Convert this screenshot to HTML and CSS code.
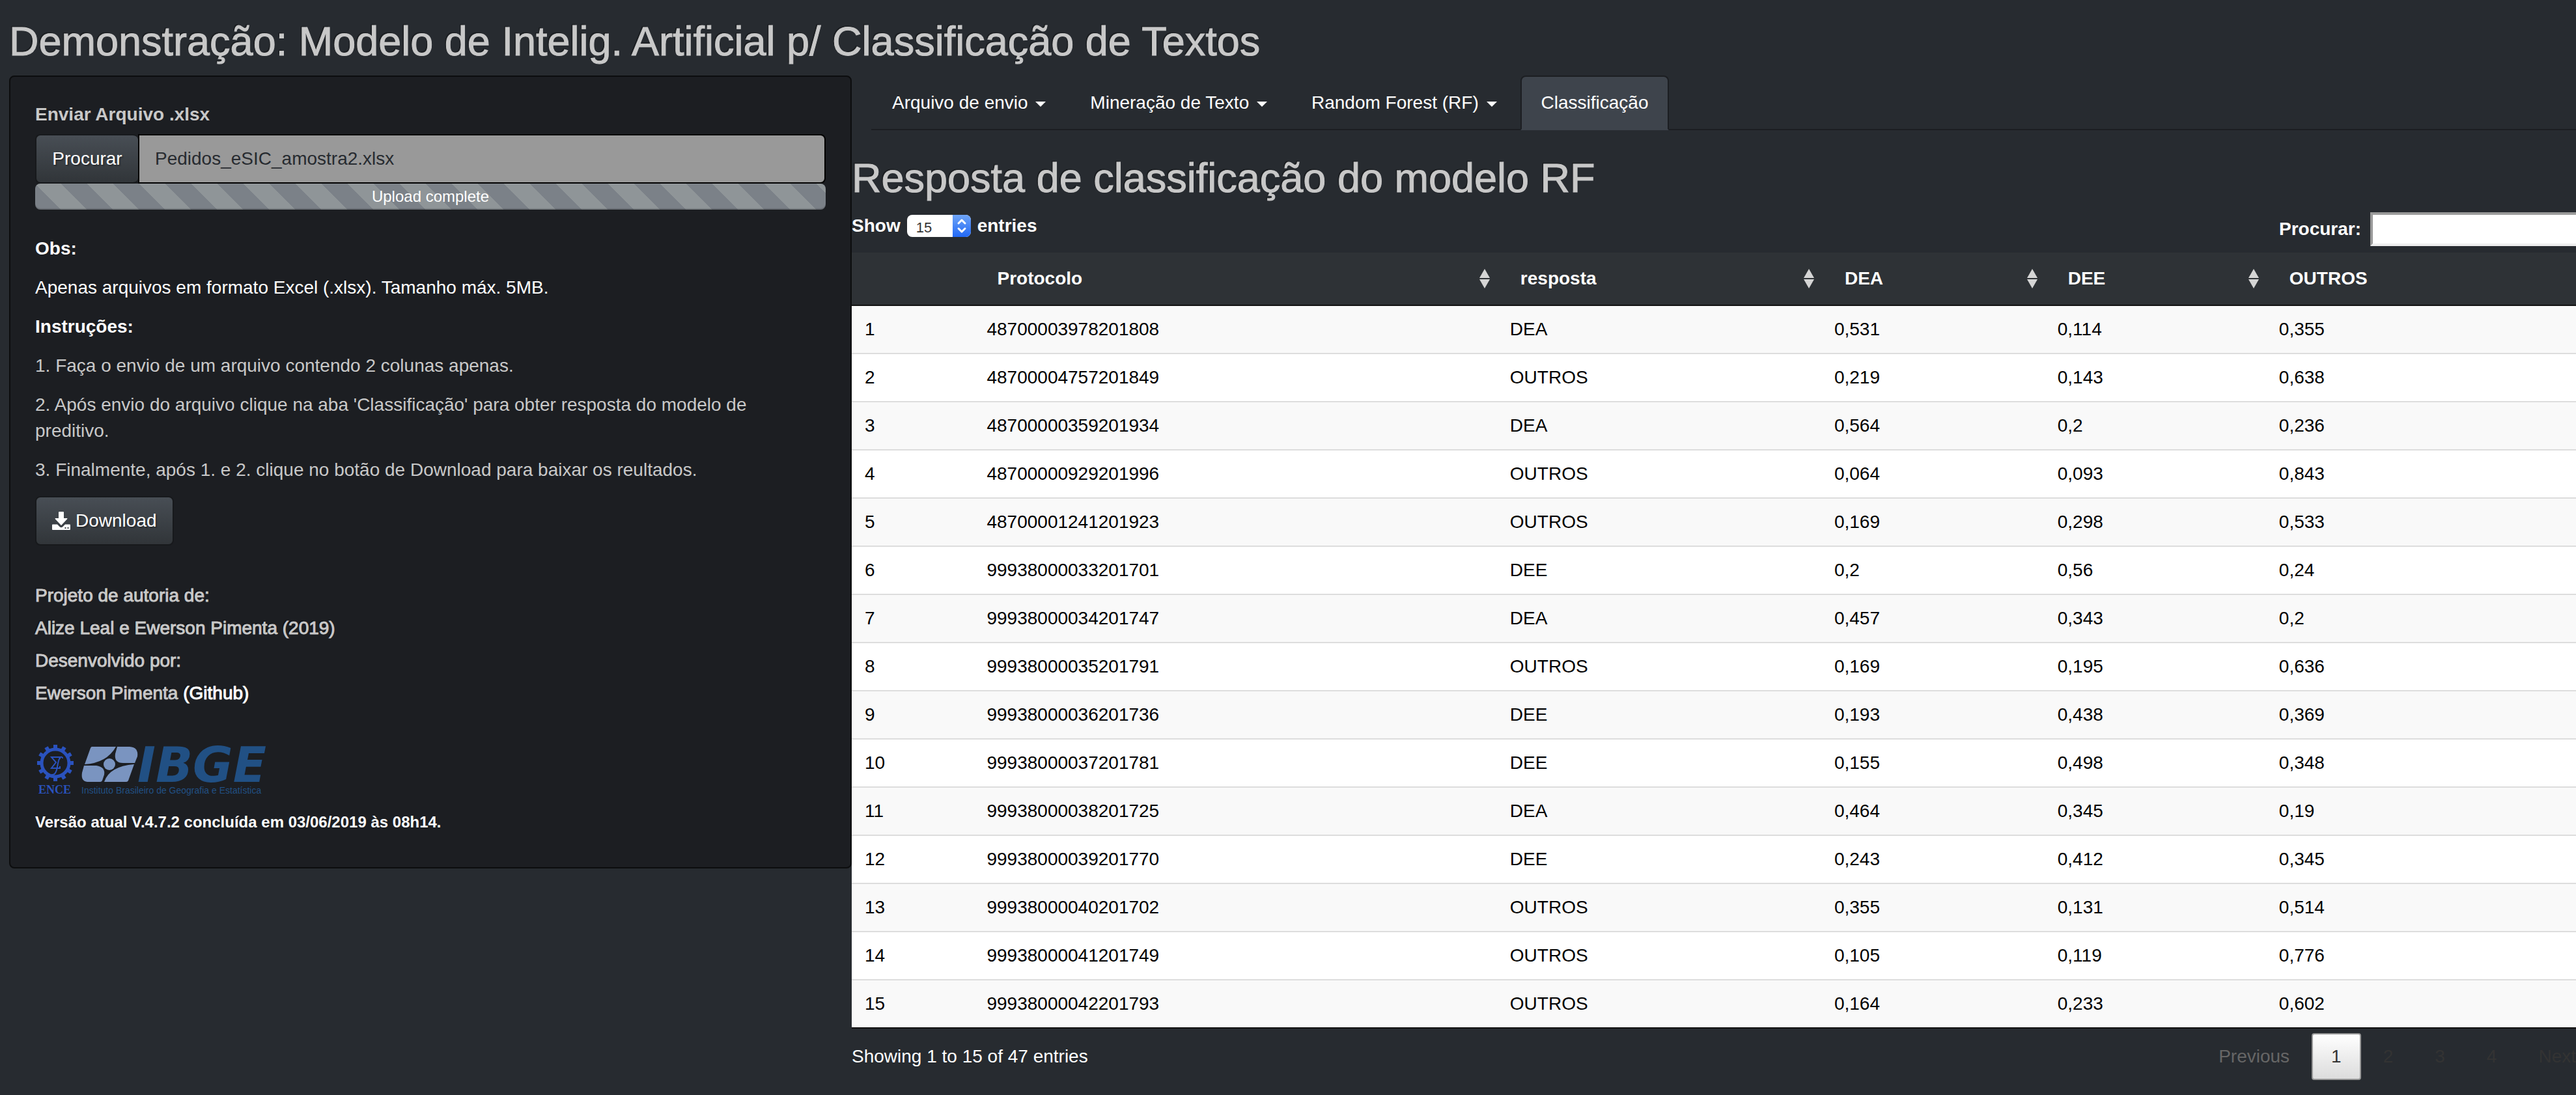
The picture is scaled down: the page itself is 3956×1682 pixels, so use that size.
FILE: index.html
```html
<!DOCTYPE html>
<html lang="pt-BR">
<head>
<meta charset="utf-8">
<title>Classificação de Textos</title>
<link rel="stylesheet" href="styles.css">
</head>
<body>
<h2 class="page-title">Demonstração: Modelo de Intelig. Artificial p/ Classificação de Textos</h2>
<div class="layout">
  <aside class="well">
    <label class="file-label" for="file-name">Enviar Arquivo .xlsx</label>
    <div class="file-group">
      <button class="btn btn-file" type="button">Procurar</button>
      <input class="file-name" id="file-name" type="text" value="Pedidos_eSIC_amostra2.xlsx" readonly>
    </div>
    <div class="progress">Upload complete</div>
    <p class="strong">Obs:</p>
    <p class="white">Apenas arquivos em formato Excel (.xlsx). Tamanho máx. 5MB.</p>
    <p class="strong">Instruções:</p>
    <p>1. Faça o envio de um arquivo contendo 2 colunas apenas.</p>
    <p>2. Após envio do arquivo clique na aba 'Classificação' para obter resposta do modelo de preditivo.</p>
    <p>3. Finalmente, após 1. e 2. clique no botão de Download para baixar os reultados.</p>
    <button class="btn btn-download" type="button">
      <svg class="dl-icon" viewBox="0 0 28 28" aria-hidden="true"><path fill="#fff" fill-rule="evenodd" d="M11 0h6q1 0 1 1v9h5q1 0 0 1.500L14.500 20.500q-.5.5-1 0L5 11.500Q4 10 5 10h5V1q0-1 1-1zM1 19.500h7l4 4q2 1.500 4 0l4-4h7q1 0 1 1V27q0 1-1 1H1q-1 0-1-1v-6.500q0-1 1-1zM19.500 24v2h2v-2zM23.500 24v2h2v-2z"/></svg>
      Download</button>
    <div class="credits">
      <h5>Projeto de autoria de:</h5>
      <h5>Alize Leal e Ewerson Pimenta (2019)</h5>
      <h5>Desenvolvido por:</h5>
      <h5>Ewerson Pimenta <a href="#github">(Github)</a></h5>
    </div>
    <svg class="logos" viewBox="0 0 360 80" role="img" aria-label="ENCE e IBGE">
      <g fill="#2a52be">
        <path d="M28 2h6v56h-6z"/>
        <path d="M28 2h6v56h-6z" transform="rotate(30 31 30)"/>
        <path d="M28 2h6v56h-6z" transform="rotate(60 31 30)"/>
        <path d="M28 2h6v56h-6z" transform="rotate(90 31 30)"/>
        <path d="M28 2h6v56h-6z" transform="rotate(120 31 30)"/>
        <path d="M28 2h6v56h-6z" transform="rotate(150 31 30)"/>
      </g>
      <circle cx="31" cy="30" r="21" fill="#1c1e22" stroke="#2a52be" stroke-width="5"/>
      <path d="M38 24v-3H25l7 8-7 9h13v-3M42 23q0-3-3-2-3 2-5 15-2 12-7 12h-2" fill="none" stroke="#2a52be" stroke-width="2"/>
      <text x="5" y="77" class="ence">ENCE</text>
      <g fill="#7a94c0">
        <path d="M87 5h37Q110 30 76 32l9-25q1-2 2-2z"/>
        <path d="M126 5h19q14 1 12 15l-4 10h-18q-14 0-12-14z"/>
        <path d="M75 34h19q14 2 12 14l-3 9q-1 2-3 2H80q-10-1-8-14z"/>
        <path d="M152 32l-9 25q-1 2-3 2h-34q8-24 46-27z"/>
        <circle cx="114" cy="32" r="9"/>
      </g>
      <text x="157" y="59" class="ibge">IBGE</text>
      <text x="71" y="77" class="ibge-sub">Instituto Brasileiro de Geografia e Estatística</text>
    </svg>
    <h6>Versão atual V.4.7.2 concluída em 03/06/2019 às 08h14.</h6>
  </aside>
  <main class="main">
    <nav class="tabs">
      <a class="tab" href="#envio">Arquivo de envio <span class="caret"></span></a>
      <a class="tab" href="#mineracao">Mineração de Texto <span class="caret"></span></a>
      <a class="tab" href="#rf">Random Forest (RF) <span class="caret"></span></a>
      <a class="tab active" href="#classificacao">Classificação</a>
    </nav>
    <h2 class="result-title">Resposta de classificação do modelo RF</h2>
    <div class="controls">
      <label class="length">Show
        <span class="select-wrap"><select><option>15</option></select><svg class="stepper" viewBox="0 0 28 34" aria-hidden="true"><path d="M9 13l5-5 5 5M9 21l5 5 5-5" fill="none" stroke="#fff" stroke-width="3" stroke-linecap="round" stroke-linejoin="round"/></svg></span>
        entries</label>
      <label class="search">Procurar: <input type="search"></label>
    </div>
    <table class="data">
      <colgroup><col class="c-row"><col class="c-prot"><col class="c-resp"><col class="c-dea"><col class="c-dee"><col class="c-out"></colgroup>
      <thead><tr><th></th><th class="sort">Protocolo</th><th class="sort">resposta</th><th class="sort">DEA</th><th class="sort">DEE</th><th>OUTROS</th></tr></thead>
      <tbody>
        <tr><td>1</td><td>48700003978201808</td><td>DEA</td><td>0,531</td><td>0,114</td><td>0,355</td></tr>
        <tr><td>2</td><td>48700004757201849</td><td>OUTROS</td><td>0,219</td><td>0,143</td><td>0,638</td></tr>
        <tr><td>3</td><td>48700000359201934</td><td>DEA</td><td>0,564</td><td>0,2</td><td>0,236</td></tr>
        <tr><td>4</td><td>48700000929201996</td><td>OUTROS</td><td>0,064</td><td>0,093</td><td>0,843</td></tr>
        <tr><td>5</td><td>48700001241201923</td><td>OUTROS</td><td>0,169</td><td>0,298</td><td>0,533</td></tr>
        <tr><td>6</td><td>99938000033201701</td><td>DEE</td><td>0,2</td><td>0,56</td><td>0,24</td></tr>
        <tr><td>7</td><td>99938000034201747</td><td>DEA</td><td>0,457</td><td>0,343</td><td>0,2</td></tr>
        <tr><td>8</td><td>99938000035201791</td><td>OUTROS</td><td>0,169</td><td>0,195</td><td>0,636</td></tr>
        <tr><td>9</td><td>99938000036201736</td><td>DEE</td><td>0,193</td><td>0,438</td><td>0,369</td></tr>
        <tr><td>10</td><td>99938000037201781</td><td>DEE</td><td>0,155</td><td>0,498</td><td>0,348</td></tr>
        <tr><td>11</td><td>99938000038201725</td><td>DEA</td><td>0,464</td><td>0,345</td><td>0,19</td></tr>
        <tr><td>12</td><td>99938000039201770</td><td>DEE</td><td>0,243</td><td>0,412</td><td>0,345</td></tr>
        <tr><td>13</td><td>99938000040201702</td><td>OUTROS</td><td>0,355</td><td>0,131</td><td>0,514</td></tr>
        <tr><td>14</td><td>99938000041201749</td><td>OUTROS</td><td>0,105</td><td>0,119</td><td>0,776</td></tr>
        <tr><td>15</td><td>99938000042201793</td><td>OUTROS</td><td>0,164</td><td>0,233</td><td>0,602</td></tr>
      </tbody>
    </table>
    <div class="footer">
      <div>Showing 1 to 15 of 47 entries</div>
      <div class="pager">
        <button class="page disabled" type="button">Previous</button>
        <button class="page current" type="button">1</button>
        <button class="page" type="button">2</button>
        <button class="page" type="button">3</button>
        <button class="page" type="button">4</button>
        <button class="page" type="button">Next</button>
      </div>
    </div>
  </main>
</div>
</body>
</html>
```
FILE: styles.css
```css
* { box-sizing: border-box; }
body {
  margin: 0;
  min-height: 100vh;
  overflow: hidden;
  background: #272b30;
  color: #c8c8c8;
  font: 28px/40px "Liberation Sans", Arial, sans-serif;
}
h2, h5, h6, p { margin: 0; }
button, input, select { font: inherit; }
a { color: #fff; text-decoration: none; }

.page-title, .result-title {
  font-size: 63px;
  line-height: 66px;
  font-weight: 400;
  -webkit-text-stroke: 1px #c8c8c8;
  text-shadow: -2px -2px 0 rgba(0, 0, 0, .3);
}
.page-title { padding: 30px 14px 20px; }

.layout {
  display: grid;
  grid-template-columns: 1294fr 2678fr;
  margin: 0 -30px 0 14px;
  align-items: start;
}

.well {
  min-width: 0;
  padding: 38px;
  background: #1c1e22;
  border: 2px solid #0c0d0e;
  border-radius: 8px;
}
.well p { margin-bottom: 20px; padding-right: 20px; }
.well .strong { color: #fff; font-weight: 700; }
.well .white { color: #fff; }
.file-label { display: block; margin-bottom: 10px; font-weight: 700; }
.file-group { display: flex; height: 76px; }
.btn {
  border: 2px solid #17191c;
  border-radius: 8px;
  background: linear-gradient(#484e55, #3a3f44 60%, #313539);
  color: #fff;
  text-shadow: 2px 2px 2px rgba(0, 0, 0, .3);
}
.btn-file { width: 158px; padding: 0; border-right: 0; }
.file-name {
  flex: 1;
  min-width: 0;
  padding: 16px 24px;
  background: #999;
  border: 2px solid #000;
  border-radius: 0 8px 8px 0;
  color: #272b30;
}
.progress {
  height: 40px;
  margin-bottom: 40px;
  border-radius: 8px;
  background: linear-gradient(45deg, #8f9598 25%, #7b8188 25% 50%, #8f9598 50% 75%, #7b8188 75%) 0 0 / 80px 80px;
  box-shadow: inset 0 -2px 0 rgba(0, 0, 0, .15);
  color: #fff;
  font-size: 24px;
  text-align: center;
}
.btn-download {
  display: flex;
  align-items: center;
  gap: 8px;
  height: 76px;
  padding: 0 24px;
}
.dl-icon { width: 28px; height: 28px; }
.credits { padding: 62px 0; }
.credits h5 {
  font-size: 28px;
  line-height: 30px;
  font-weight: 400;
  -webkit-text-stroke: 1px;
  text-shadow: -2px -2px 0 rgba(0, 0, 0, .3);
}
.credits h5 + h5 { margin-top: 20px; }
.logos { display: block; width: 360px; height: 80px; overflow: visible; }
.ence { fill: #2a52be; font: 700 18px "Liberation Serif", serif; }
.ibge { fill: #215084; font: italic 700 75px "DejaVu Sans", sans-serif; }
.ibge-sub { fill: #215084; font: 14px "Liberation Sans", sans-serif; }
.well h6 { margin: 28px 0 18px; color: #fff; font-size: 24px; line-height: 26px; font-weight: 700; }

.main { min-width: 0; color: #fff; }
.tabs { display: flex; gap: 4px; margin-left: 30px; border-bottom: 2px solid #1c1e22; }
.tab {
  padding: 20px 30px;
  margin-bottom: -2px;
  border: 2px solid transparent;
  border-radius: 8px 8px 0 0;
}
.tab.active { background: #3e444c; border-color: #1c1e22; border-bottom-color: #3e444c; }
.caret {
  display: inline-block;
  margin-left: 4px;
  vertical-align: middle;
  border: 8px solid transparent;
  border-top-color: #fff;
  border-bottom: 0;
}
.result-title { margin: 40px 0 20px; color: #c8c8c8; }
.controls { display: flex; justify-content: space-between; align-items: flex-start; height: 62px; }
.length { display: flex; gap: 10px; padding-top: 1px; font-weight: 700; }
.select-wrap { display: flex; position: relative; align-self: center; }
.select-wrap select {
  appearance: none;
  width: 98px;
  height: 34px;
  padding: 0 14px;
  border: 0;
  border-radius: 8px;
  background: #fff;
  color: #333;
  font-size: 22px;
  font-weight: 400;
}
.stepper {
  position: absolute;
  right: 0;
  top: 0;
  width: 28px;
  height: 34px;
  border-radius: 0 8px 8px 0;
  background: linear-gradient(#6fa5f7, #2168f5);
  pointer-events: none;
}
.search { display: flex; align-items: center; gap: 14px; font-weight: 700; }
.search input { width: 346px; height: 52px; border: 4px solid; border-color: #9a9a9a #eee #eee #9a9a9a; background: #fff; }

.data { width: 100%; table-layout: fixed; border-collapse: separate; border-spacing: 0; border-bottom: 2px solid #111; }
.c-row { width: 7%; }
.c-prot { width: 30%; }
.c-resp { width: 18.6%; }
.c-dea { width: 12.8%; }
.c-dee { width: 12.7%; }
.data th {
  padding: 20px 36px;
  background: #2e3236;
  border-bottom: 2px solid #111;
  text-align: left;
}
.sort { position: relative; }
.sort::before, .sort::after {
  content: "";
  position: absolute;
  right: 11px;
  border: 8px solid transparent;
}
.sort::before { top: 25px; border-top: 0; border-bottom: 14px solid #d5d5d5; }
.sort::after { top: 41px; border-bottom: 0; border-top: 14px solid #d5d5d5; }
.data td { padding: 16px 20px; background: #fff; border-top: 2px solid #ddd; color: #000; }
.data tr:nth-child(odd) td { background: #f9f9f9; }
.data tbody tr:first-child td { border-top: 0; }

.footer { display: flex; justify-content: space-between; align-items: center; padding-top: 7px; }
.pager { display: flex; gap: 4px; }
.page {
  height: 72px;
  padding: 0 28px;
  border: 2px solid transparent;
  border-radius: 4px;
  background: none;
  color: #333;
}
.page.disabled { color: #666; }
.page.current { border-color: #979797; background: linear-gradient(#fff, #dcdcdc); }
```
